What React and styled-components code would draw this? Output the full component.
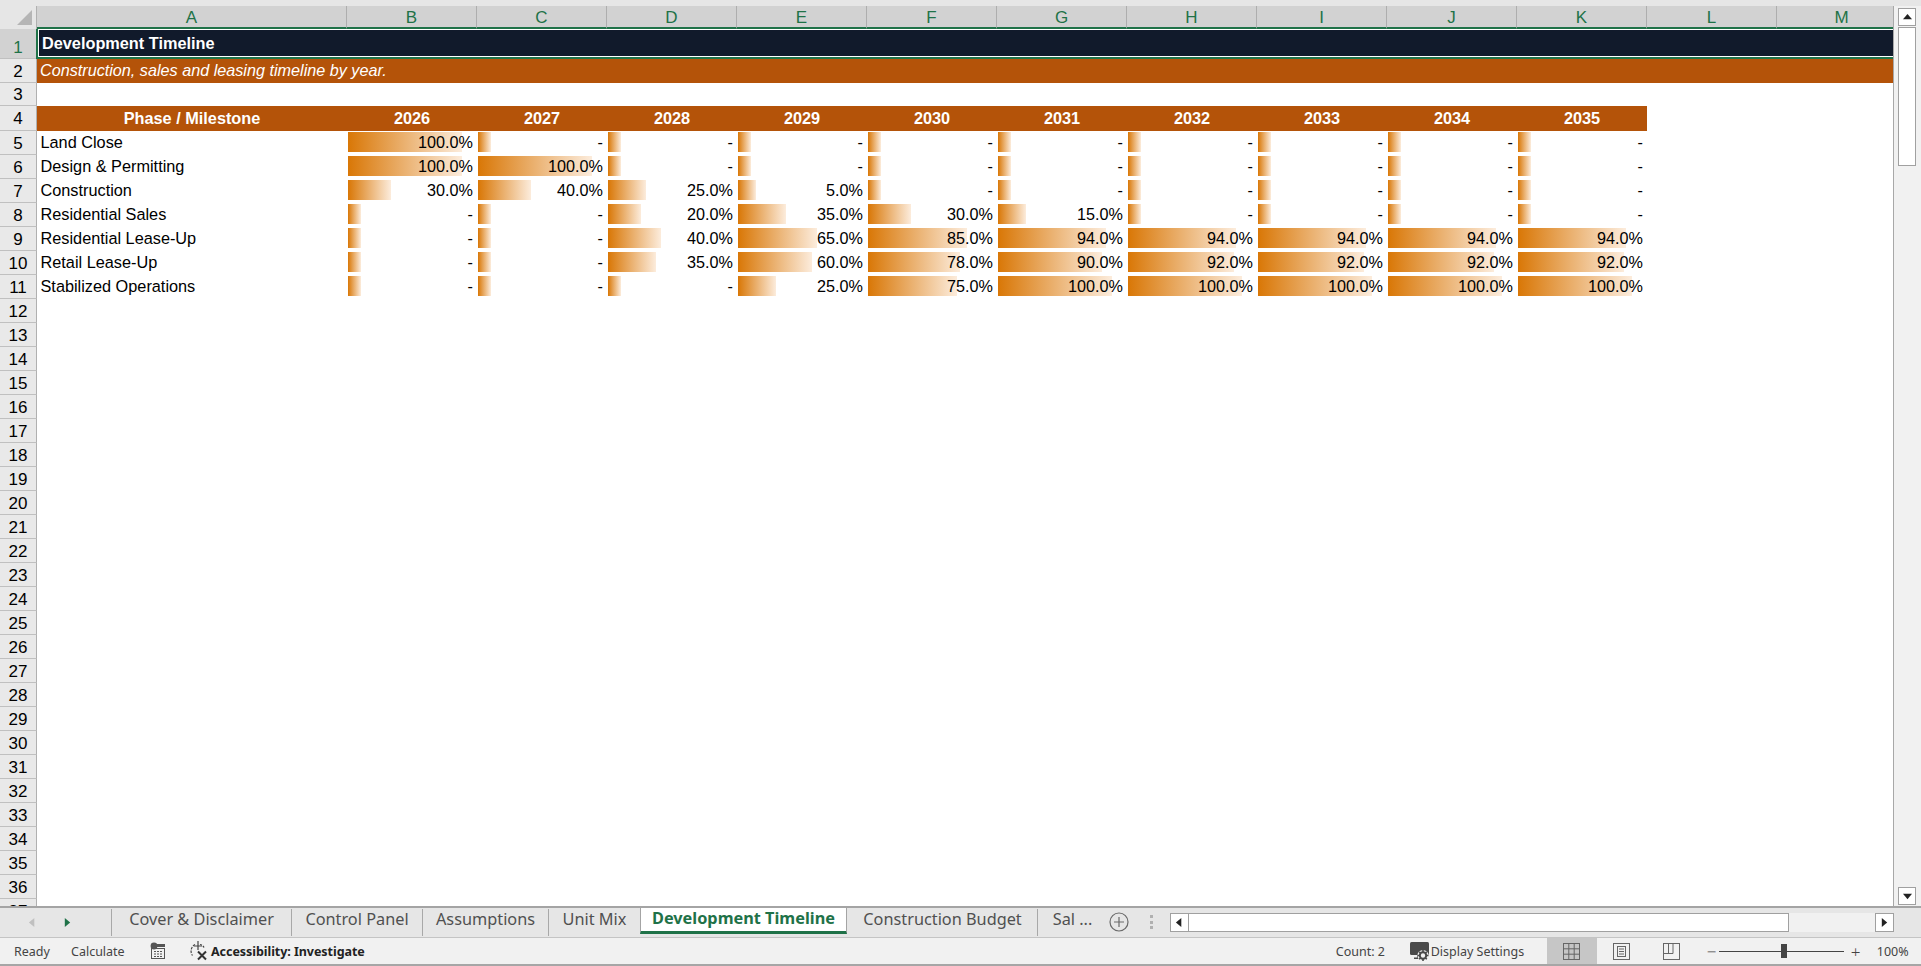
import React from "react";
import styled, { createGlobalStyle } from "styled-components";

const Global = createGlobalStyle`
  html, body { margin: 0; padding: 0; background: #fff; overflow: hidden; }
  * { box-sizing: border-box; }
`;

const GREEN = "#1f7248";
const ORANGE = "#b45309";
const CELL_FONT = `"Liberation Sans", Arial, sans-serif`;
const UI_FONT = `"Noto Sans", "Open Sans", sans-serif`;

const Window = styled.div`
  width: 1921px; height: 966px; display: flex; flex-direction: column;
  overflow: hidden; background: #e6e6e6; font-family: ${CELL_FONT};
`;
const TopStrip = styled.div`height: 6px; flex: none; background: #e6e6e6;`;
const Main = styled.div`flex: none; height: 900px; display: flex;`;
const Sheet = styled.div`
  width: 1894px; flex: none; overflow: hidden; background: #fff;
  display: flex; flex-direction: column; border-right: 1px solid #a8a8a8;
`;
const HeaderRow = styled.div`display: flex; height: 23px; flex: none;`;
const Corner = styled.div`
  width: 37px; flex: none; background: #e6e6e6; position: relative;
  border-right: 1px solid #b0b0b0; display: flex; align-items: flex-start; justify-content: flex-end;
  padding: 4px 3px 0 0;
`;
const Columns = styled.div`
  display: grid; grid-template-columns: 310px repeat(12, 130px); flex: none;
`;
const ColHead = styled.div`
  background: #d2d2d2; color: ${GREEN}; font-size: 17px; height: 23px;
  display: flex; align-items: center; justify-content: center; padding-top: 2px;
  border-right: 1px solid #aeaeae; border-bottom: 2px solid ${GREEN};
`;
const Row = styled.div`display: flex; height: ${(p) => p.$h}px; flex: none;`;
const RowHead = styled.div`
  width: 37px; flex: none; display: flex; align-items: center; justify-content: center;
  font-size: 17px; border-right: 1px solid #b0b0b0; border-bottom: 1px solid #c0c0c0;
  background: ${(p) => (p.$sel ? "#d2d2d2" : "#e9e9e9")};
  color: ${(p) => (p.$sel ? GREEN : "#000")};
  padding-top: ${(p) => (p.$sel ? 8 : 2)}px;
`;
const TitleBand = styled.div`
  flex: 1; margin-left: -1px; background: #111a2b; color: #fff; font-weight: 700; font-size: 16.3px;
  display: flex; align-items: center; padding-left: 4px; padding-top: 1px;
  border: 2px solid ${GREEN}; border-width: 0 0 2px 2px; box-shadow: inset 1px 1px 0 #fff, inset 0 -1px 0 #fff;
`;
const SubBand = styled.div`
  flex: 1; background: ${ORANGE}; color: #fff; font-style: italic; font-size: 16.2px;
  display: flex; align-items: center; padding: 0 0 2px 3px;
`;
const HeadCell = styled.div`
  background: ${ORANGE}; color: #fff; font-weight: 700; font-size: 16.3px;
  display: flex; align-items: center; justify-content: center;
`;
const LabelCell = styled.div`
  display: flex; align-items: center; padding: 0 0 2px 3.5px; font-size: 16.3px; color: #000; white-space: nowrap;
`;
const ValueCell = styled.div`
  position: relative; display: flex; align-items: center; justify-content: flex-end;
  padding: 0 4px 1px 0; font-size: 16.2px; color: #000;
`;
const Bar = styled.div`
  position: absolute; left: 1px; top: 1px; height: 20px;
  background: linear-gradient(90deg, #d97706, #fcecdc);
`;
const ValueText = styled.span`position: relative;`;

const VScroll = styled.div`
  flex: 1; background: #f1f1f1; display: flex; flex-direction: column; padding: 2px 5px 1px 4px;
`;
const ScrollBtn = styled.div`
  width: 18px; height: 18px; flex: none; background: #fff; border: 1px solid #a0a0a0;
  display: flex; align-items: center; justify-content: center;
`;
const VThumb = styled.div`
  width: 18px; height: 139px; flex: none; margin-top: 1px; background: #fff; border: 1px solid #a0a0a0;
`;
const Spacer = styled.div`flex: 1;`;

const TabBar = styled.div`
  flex: none; height: 32px; display: flex; align-items: stretch; background: #e6e6e6;
  border-top: 2px solid #a4a4a4; border-bottom: 1px solid #c4c4c4; position: relative;
`;
const TabNav = styled.div`
  width: 111px; flex: none; display: flex; align-items: center; padding-left: 28px; gap: 26px;
`;
const Tab = styled.div`
  width: ${(p) => p.$w}px; flex: none; display: flex; align-items: center; justify-content: center;
  font-family: ${UI_FONT}; font-size: 16.3px; color: #505050; position: relative; white-space: nowrap;
  padding-bottom: 8px; height: 27px; margin-top: 1px;
  border-left: 1px solid ${(p) => (p.$plain ? "transparent" : "#a8a8a8")};
`;
const ActiveTab = styled.div`
  width: ${(p) => p.$w}px; flex: none; display: flex; align-items: center; justify-content: center;
  font-family: ${UI_FONT}; font-size: 16.3px; font-weight: 700; color: ${GREEN}; white-space: nowrap;
  background: #fff; height: 28px; margin-top: -2px; padding-bottom: 3px;
  border: 1px solid #a4a4a4; border-top-width: 2px; border-bottom: 3px solid ${GREEN};
`;
const AddWrap = styled.div`
  width: 20px; height: 24px; flex: none; margin: 2px 0 0 2px; display: flex; align-items: center; justify-content: center;
`;
const Dots = styled.div`
  flex: none; width: 4px; margin: 7px 0 0 20px; height: 14px; display: flex; flex-direction: column; justify-content: space-between; align-items: center;
  & > i { display: block; width: 3px; height: 3px; background: #b0b0b0; }
`;
const HScroll = styled.div`
  position: absolute; left: 1170px; top: 5px; width: 724px; height: 19px; display: flex; background: #f1f1f1;
`;
const HBtn = styled.div`
  width: 19px; height: 19px; flex: none; background: #fff; border: 1px solid #a0a0a0;
  display: flex; align-items: center; justify-content: center;
`;
const HThumb = styled.div`width: 600px; flex: none; background: #fff; border: 1px solid #a0a0a0; border-left: 0;`;

const Status = styled.div`
  flex: 1; display: flex; align-items: stretch; background: #f1f1f1; border-bottom: 2px solid #a6a6a6;
  font-family: ${UI_FONT}; font-size: 12.5px; color: #444; white-space: nowrap;
`;
const StatusItem = styled.div`
  display: flex; align-items: center; flex: none;
  margin-left: ${(p) => p.$ml || 0}px; width: ${(p) => (p.$w ? p.$w + "px" : "auto")};
  font-weight: ${(p) => (p.$bold ? 700 : 400)}; color: ${(p) => (p.$bold ? "#222" : "#444")};
  letter-spacing: ${(p) => (p.$bold ? "-0.05px" : "0")};
  gap: ${(p) => p.$gap || 0}px;
`;
const ZoomSign = styled.div`
  flex: none; width: ${(p) => p.$w}px; margin-left: ${(p) => p.$ml}px; display: flex; align-items: center; font-size: 17px; color: #444; font-weight: 300;
`;
const ViewBtn = styled.div`
  flex: none; width: ${(p) => p.$w}px; display: flex; align-items: center; justify-content: center;
  background: ${(p) => (p.$on ? "#c6c6c6" : "transparent")};
`;
const Slider = styled.div`
  flex: none; width: 125px; margin-left: 0; position: relative; display: flex; align-items: center;
  &::before { content: ""; display: block; height: 1px; width: 100%; background: #444; }
`;
const Knob = styled.div`
  position: absolute; left: 62px; top: 50%; width: 6px; height: 14px; margin-top: -7px; background: #444;
`;

const cols = "ABCDEFGHIJKLM".split("");
const years = [2026, 2027, 2028, 2029, 2030, 2031, 2032, 2033, 2034, 2035];
const rows = [
  ["Land Close", [100, 0, 0, 0, 0, 0, 0, 0, 0, 0]],
  ["Design & Permitting", [100, 100, 0, 0, 0, 0, 0, 0, 0, 0]],
  ["Construction", [30, 40, 25, 5, 0, 0, 0, 0, 0, 0]],
  ["Residential Sales", [0, 0, 20, 35, 30, 15, 0, 0, 0, 0]],
  ["Residential Lease-Up", [0, 0, 40, 65, 85, 94, 94, 94, 94, 94]],
  ["Retail Lease-Up", [0, 0, 35, 60, 78, 90, 92, 92, 92, 92]],
  ["Stabilized Operations", [0, 0, 0, 25, 75, 100, 100, 100, 100, 100]],
];

const Tri = ({ dir = "up", color = "#222", size = 9 }) => {
  const pts = { up: "0,7 10,7 5,1", down: "0,2 10,2 5,8", left: "7,0 7,10 1,5", right: "2,0 2,10 8,5" }[dir];
  return (
    <svg width={size} height={size} viewBox="0 0 10 10"><polygon points={pts} fill={color} /></svg>
  );
};

const MacroIcon = () => (
  <svg width="16" height="18" viewBox="0 0 16 18">
    <circle cx="4" cy="4" r="3.4" fill="#555" />
    <path d="M7 2h8v3H7z" fill="#555" />
    <rect x="1.5" y="6.5" width="13" height="10" fill="none" stroke="#555" />
    <path d="M4 9.5h2M7 9.5h2M10 9.5h2M4 12h2M7 12h2M10 12h2M4 14.5h2M7 14.5h2M10 14.5h2" stroke="#555" strokeWidth="1.2" />
  </svg>
);
const A11yIcon = () => (
  <svg width="20" height="22" viewBox="0 0 20 22" fill="none" stroke="#444" strokeWidth="1.2">
    <path d="M6 4.5A7.5 7.5 0 0 0 3.5 15.5" strokeDasharray="2.5 1.2" />
    <path d="M9 1v9M5 6h8" />
    <path d="M11 4.5c2 .5 3.4 1.6 4 3" strokeDasharray="2 1.2" />
    <path d="M9 11.5l8 8M17 11.5l-8 8" strokeWidth="2" stroke="#333" />
  </svg>
);
const DisplayIcon = () => (
  <svg width="22" height="22" viewBox="0 0 22 22">
    <rect x="1" y="2" width="19" height="13" rx="1.5" fill="#4a4a4a" />
    <path d="M5 19h6v-4H8v2.5H5z" fill="#4a4a4a" />
    <circle cx="14" cy="15.5" r="5.6" fill="#f1f1f1" />
    <circle cx="14" cy="15.5" r="3.2" fill="none" stroke="#4a4a4a" strokeWidth="2" />
    <path d="M14 10v2M14 19v2M8.5 15.5h2M17.5 15.5h2M10.2 11.7l1.4 1.4M16.4 17.9l1.4 1.4M17.8 11.7l-1.4 1.4M11.6 17.9l-1.4 1.4" stroke="#4a4a4a" strokeWidth="1.6" />
  </svg>
);
const GridIcon = () => (
  <svg width="17" height="17" viewBox="0 0 17 17" fill="none" stroke="#666">
    <rect x=".5" y=".5" width="16" height="16" />
    <path d="M5.8 .5v16M11.2 .5v16M.5 5.8h16M.5 11.2h16" />
  </svg>
);
const PageIcon = () => (
  <svg width="17" height="17" viewBox="0 0 17 17" fill="none" stroke="#666">
    <rect x=".5" y=".5" width="16" height="16" />
    <rect x="4.5" y="3.5" width="8" height="10" />
    <path d="M6 6h5M6 8.5h5M6 11h5" />
  </svg>
);
const BreakIcon = () => (
  <svg width="17" height="17" viewBox="0 0 17 17" fill="none" stroke="#666">
    <rect x=".5" y=".5" width="16" height="16" />
    <path d="M.5 10.5h9.5V.5M5.5 .5v10" />
  </svg>
);
const AddIcon = () => (
  <svg width="20" height="20" viewBox="0 0 20 20" fill="none" stroke="#6a6a6a" strokeWidth="1.2">
    <circle cx="10" cy="10" r="9" />
    <path d="M10 5v10M5 10h10" />
  </svg>
);

const fmt = (v) => (v === 0 ? "-" : v.toFixed(1) + "%");
const rowHeights = Array.from({ length: 33 }, (_, i) => i + 5);

export default function App() {
  return (
    <Window>
      <Global />
      <TopStrip />
      <Main>
        <Sheet>
          <HeaderRow>
            <Corner>
              <svg width="16" height="16" viewBox="0 0 16 16"><polygon points="15,0 15,15 0,15" fill="#b5b5b5" /></svg>
            </Corner>
            <Columns>
              {cols.map((c) => <ColHead key={c}>{c}</ColHead>)}
            </Columns>
          </HeaderRow>
          <Row $h={30}>
            <RowHead $sel>1</RowHead>
            <TitleBand>Development Timeline</TitleBand>
          </Row>
          <Row $h={24}>
            <RowHead>2</RowHead>
            <SubBand>Construction, sales and leasing timeline by year.</SubBand>
          </Row>
          <Row $h={23}><RowHead>3</RowHead></Row>
          <Row $h={25}>
            <RowHead>4</RowHead>
            <Columns>
              <HeadCell>Phase / Milestone</HeadCell>
              {years.map((y) => <HeadCell key={y}>{y}</HeadCell>)}
            </Columns>
          </Row>
          {rowHeights.map((n) => {
            const data = rows[n - 5];
            return (
              <Row $h={24} key={n}>
                <RowHead>{n}</RowHead>
                {data && (
                  <Columns>
                    <LabelCell>{data[0]}</LabelCell>
                    {data[1].map((v, i) => (
                      <ValueCell key={i}>
                        <Bar style={{ width: 13 + v * 1.01 }} />
                        <ValueText>{fmt(v)}</ValueText>
                      </ValueCell>
                    ))}
                  </Columns>
                )}
              </Row>
            );
          })}
        </Sheet>
        <VScroll>
          <ScrollBtn><Tri dir="up" /></ScrollBtn>
          <VThumb />
          <Spacer />
          <ScrollBtn><Tri dir="down" /></ScrollBtn>
        </VScroll>
      </Main>
      <TabBar>
        <TabNav>
          <Tri dir="left" color="#c0c0c0" />
          <Tri dir="right" color={GREEN} />
        </TabNav>
        <Tab $w={180}>Cover &amp; Disclaimer</Tab>
        <Tab $w={131}>Control Panel</Tab>
        <Tab $w={126}>Assumptions</Tab>
        <Tab $w={92}>Unit Mix</Tab>
        <ActiveTab $w={207}>Development Timeline</ActiveTab>
        <Tab $w={190} $plain>Construction Budget</Tab>
        <Tab $w={70}>Sal ...</Tab>
        <AddWrap><AddIcon /></AddWrap>
        <Dots><i /><i /><i /></Dots>
        <HScroll>
          <HBtn><Tri dir="left" /></HBtn>
          <HThumb />
          <Spacer />
          <HBtn><Tri dir="right" /></HBtn>
        </HScroll>
      </TabBar>
      <Status>
        <StatusItem $ml={14} $w={57}>Ready</StatusItem>
        <StatusItem $w={79}>Calculate</StatusItem>
        <StatusItem $w={39}><MacroIcon /></StatusItem>
        <StatusItem $bold $gap={2}><A11yIcon />Accessibility: Investigate</StatusItem>
        <StatusItem $ml={971} $w={73}>Count: 2</StatusItem>
        <StatusItem $gap={0} $w={138}><DisplayIcon />Display Settings</StatusItem>
        <ViewBtn $on $w={50}><GridIcon /></ViewBtn>
        <ViewBtn $w={50}><PageIcon /></ViewBtn>
        <ViewBtn $w={50}><BreakIcon /></ViewBtn>
        <ZoomSign $ml={10} $w={12}>−</ZoomSign>
        <Slider><Knob /></Slider>
        <ZoomSign $ml={7} $w={26}>+</ZoomSign>
        <StatusItem>100%</StatusItem>
      </Status>
    </Window>
  );
}
